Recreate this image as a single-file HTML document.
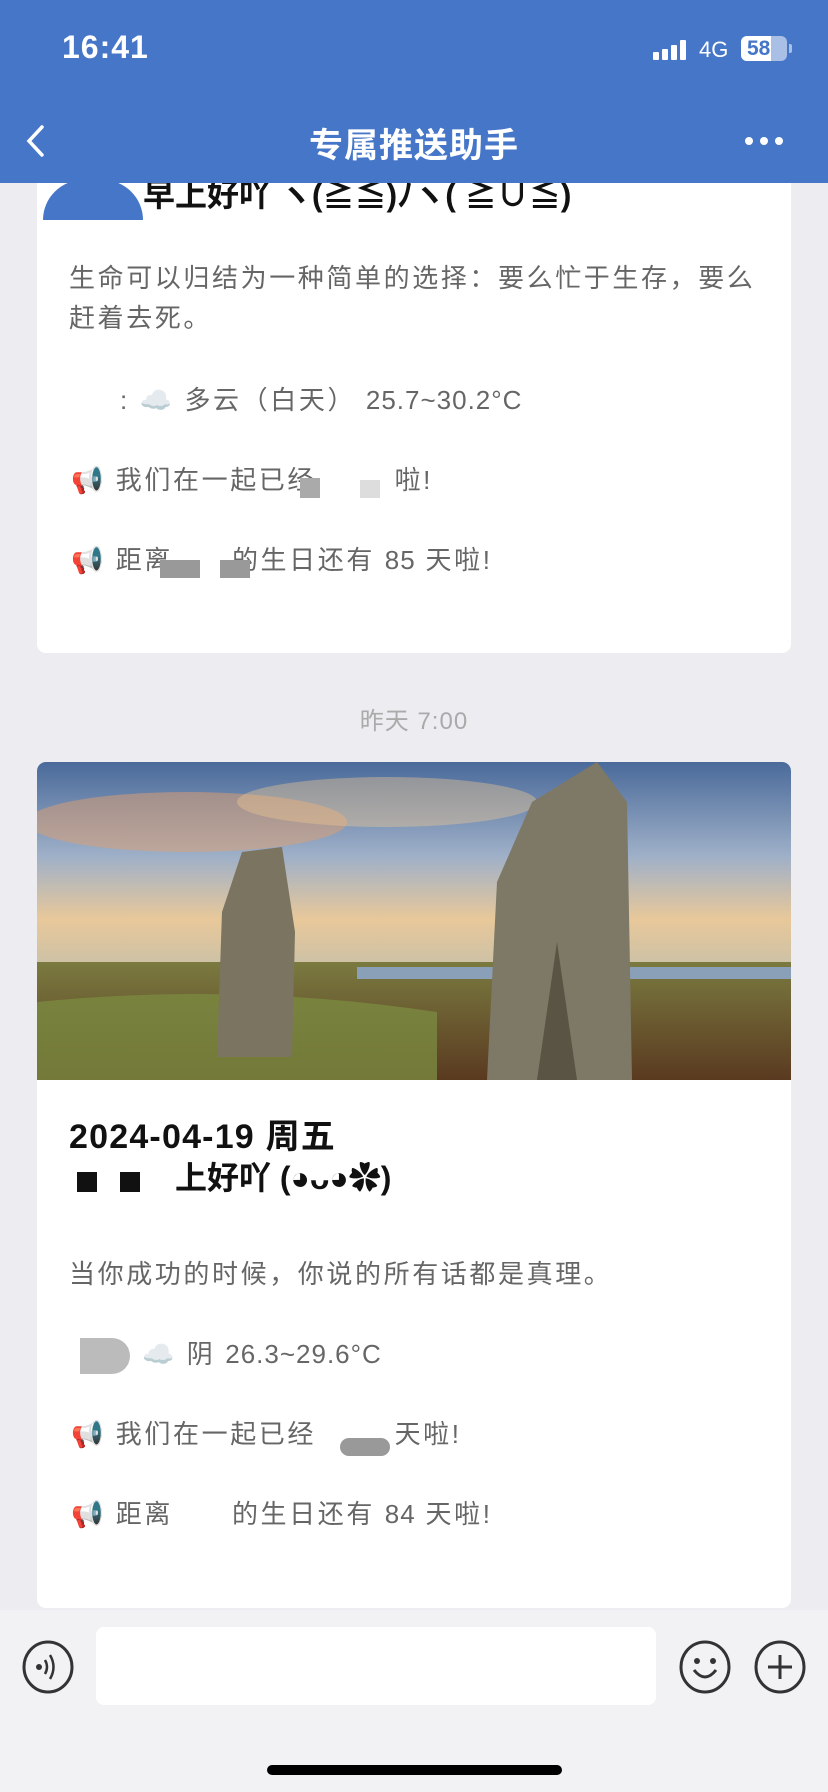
<!DOCTYPE html>
<html><head><meta charset="utf-8"><style>
*{margin:0;padding:0;box-sizing:border-box}
body{width:828px;height:1792px;background:#ededf1;position:relative;overflow:hidden;font-family:"Liberation Sans","Noto Sans CJK SC",sans-serif}
.hdr{position:absolute;left:0;top:0;width:828px;height:183px;background:#4676c8;color:#fff;z-index:5}
.t{position:absolute;font-size:26px;letter-spacing:2.6px;color:#666;white-space:nowrap}
.t b{font-weight:normal;letter-spacing:1px}
.card{position:absolute;left:37px;width:754px;background:#fff;border-radius:9px;overflow:hidden}
.blk{position:absolute;background:#888}
</style></head><body>
<div class="hdr">
 <div style="position:absolute;left:62px;top:29px;font-size:32px;font-weight:bold;letter-spacing:1px">16:41</div>
 <div style="position:absolute;left:653px;top:40px;display:flex;align-items:flex-end;gap:3px">
  <div style="width:6px;height:8px;background:#fff;border-radius:1px"></div>
  <div style="width:6px;height:11px;background:#fff;border-radius:1px"></div>
  <div style="width:6px;height:15px;background:#fff;border-radius:1px"></div>
  <div style="width:6px;height:20px;background:#fff;border-radius:1px"></div>
 </div>
 <div style="position:absolute;left:699px;top:37px;font-size:22px">4G</div>
 <div style="position:absolute;left:741px;top:36px;width:46px;height:25px;background:#a9bfe6;border-radius:6px;overflow:hidden"><div style="width:30px;height:25px;background:#fff"></div><div style="position:absolute;left:6px;top:0;font-size:21px;font-weight:bold;color:#4676c8;line-height:25px">58</div></div>
 <div style="position:absolute;left:789px;top:44px;width:3px;height:9px;background:#a9bfe6;border-radius:0 2px 2px 0"></div>
 <svg style="position:absolute;left:24px;top:124px" width="22" height="34"><path d="M18 3 L5 17 L18 31" stroke="#fff" stroke-width="3.5" fill="none" stroke-linecap="round"/></svg>
 <div style="position:absolute;left:0;width:828px;top:118px;text-align:center;font-size:34px;font-weight:bold;letter-spacing:1px">专属推送助手</div>
 <div style="position:absolute;left:745px;top:137px;display:flex;gap:7px"><i style="width:8px;height:8px;background:#fff;border-radius:50%"></i><i style="width:8px;height:8px;background:#fff;border-radius:50%"></i><i style="width:8px;height:8px;background:#fff;border-radius:50%"></i></div>
</div>

<div class="card" style="top:150px;height:503px;border-radius:0 0 9px 9px">
 <div style="position:absolute;left:106px;top:20px;font-size:32px;font-weight:bold;color:#111">早上好吖 ヽ(≧≦)ﾉヽ( ≧∪≦)</div>
 <div style="position:absolute;left:6px;top:30px;width:100px;height:40px;background:#4676c8;border-radius:50px 50px 0 0"></div>
</div>
<div class="t" style="left:69px;top:258px;line-height:40px">生命可以归结为一种简单的选择：要么忙于生存，要么<br>赶着去死。</div>
<div class="t" style="left:120px;top:380px">: ☁️ 多云（白天） <b>25.7~30.2°C</b></div>
<div class="t" style="left:71px;top:460px">📢 我们在一起已经&nbsp;&nbsp;&nbsp;&nbsp;&nbsp;&nbsp;&nbsp;&nbsp;啦!</div>
<div class="blk" style="left:300px;top:478px;width:20px;height:20px;background:#aaa"></div>
<div class="blk" style="left:360px;top:480px;width:20px;height:18px;background:#ddd"></div>
<div class="t" style="left:71px;top:540px">📢 距离&nbsp;&nbsp;&nbsp;&nbsp;&nbsp;&nbsp;的生日还有 <b>85</b> 天啦!</div>
<div class="blk" style="left:160px;top:560px;width:40px;height:18px;background:#999"></div>
<div class="blk" style="left:220px;top:560px;width:30px;height:18px;background:#999"></div>

<div style="position:absolute;left:0;width:828px;top:701px;text-align:center;font-size:24px;color:#aaa;letter-spacing:1px">昨天 7:00</div>

<div class="card" style="top:762px;height:846px">
 <svg width="754" height="318" style="display:block">
  <defs>
   <linearGradient id="s" x1="0" y1="0" x2="0" y2="1"><stop offset="0" stop-color="#4a6a9a"/><stop offset=".45" stop-color="#9fb0c8"/><stop offset=".75" stop-color="#e8c89a"/><stop offset="1" stop-color="#c8c0a8"/></linearGradient>
   <linearGradient id="g" x1="0" y1="0" x2="0" y2="1"><stop offset="0" stop-color="#7a7a40"/><stop offset="1" stop-color="#5a3a20"/></linearGradient>
  </defs>
  <rect width="754" height="210" fill="url(#s)"/>
  <ellipse cx="150" cy="60" rx="160" ry="30" fill="#e0a070" opacity=".5"/>
  <ellipse cx="350" cy="40" rx="150" ry="25" fill="#f0c890" opacity=".4"/>
  <rect y="200" width="754" height="118" fill="url(#g)"/>
  <rect x="320" y="205" width="434" height="12" fill="#8aa0b8"/>
  <path d="M0 240 Q200 220 400 250 L400 318 L0 318Z" fill="#7a8a40" opacity=".8"/>
  <path d="M180 295 L185 150 L205 90 L245 85 L258 170 L255 295Z" fill="#7a7460"/>
  <path d="M450 318 L460 120 L495 40 L560 0 L590 40 L595 318Z" fill="#7e7866"/>
  <path d="M500 318 L520 180 L540 318Z" fill="#5a5444"/>
 </svg>
 <div style="position:absolute;left:32px;top:347px;font-size:34px;font-weight:bold;color:#111;letter-spacing:1.2px">2024-04-19 周五</div>
 <div style="position:absolute;left:40px;top:410px;width:20px;height:20px;background:#111"></div>
 <div style="position:absolute;left:83px;top:410px;width:20px;height:20px;background:#111"></div>
 <div style="position:absolute;left:138px;top:391px;font-size:32px;font-weight:bold;color:#111">上好吖 (◕ᴗ◕✿)</div>
</div>
<div class="t" style="left:69px;top:1254px">当你成功的时候，你说的所有话都是真理。</div>
<div class="blk" style="left:80px;top:1338px;width:50px;height:36px;background:#bbb;border-radius:0 18px 18px 0"></div>
<div class="t" style="left:142px;top:1334px">☁️ 阴 <b>26.3~29.6°C</b></div>
<div class="t" style="left:71px;top:1414px">📢 我们在一起已经&nbsp;&nbsp;&nbsp;&nbsp;&nbsp;&nbsp;&nbsp;&nbsp;天啦!</div>
<div class="blk" style="left:340px;top:1438px;width:50px;height:18px;background:#999;border-radius:9px"></div>
<div class="t" style="left:71px;top:1494px">📢 距离&nbsp;&nbsp;&nbsp;&nbsp;&nbsp;&nbsp;的生日还有 <b>84</b> 天啦!</div>

<div style="position:absolute;left:0;top:1610px;width:828px;height:182px;background:#f2f2f5"></div>
<div style="position:absolute;left:96px;top:1627px;width:560px;height:78px;background:#fff;border-radius:8px"></div>
<svg style="position:absolute;left:20px;top:1640px" width="56" height="54"><ellipse cx="28" cy="27" rx="24" ry="25" stroke="#333" stroke-width="3" fill="none"/><circle cx="19" cy="27" r="3" fill="#333"/><path d="M25 20 Q29 27 25 34 M30 15 Q37 27 30 39" stroke="#333" stroke-width="2.5" fill="none"/></svg>
<svg style="position:absolute;left:677px;top:1640px" width="56" height="54"><ellipse cx="28" cy="27" rx="24" ry="25" stroke="#333" stroke-width="3" fill="none"/><circle cx="20" cy="21" r="3" fill="#333"/><circle cx="36" cy="21" r="3" fill="#333"/><path d="M17 30 Q28 44 39 30" stroke="#333" stroke-width="3" fill="none"/></svg>
<svg style="position:absolute;left:752px;top:1640px" width="56" height="54"><ellipse cx="28" cy="27" rx="24" ry="25" stroke="#333" stroke-width="3" fill="none"/><path d="M28 15 V39 M16 27 H40" stroke="#333" stroke-width="3"/></svg>
<div style="position:absolute;left:267px;top:1765px;width:295px;height:10px;background:#000;border-radius:5px"></div>
</body></html>
